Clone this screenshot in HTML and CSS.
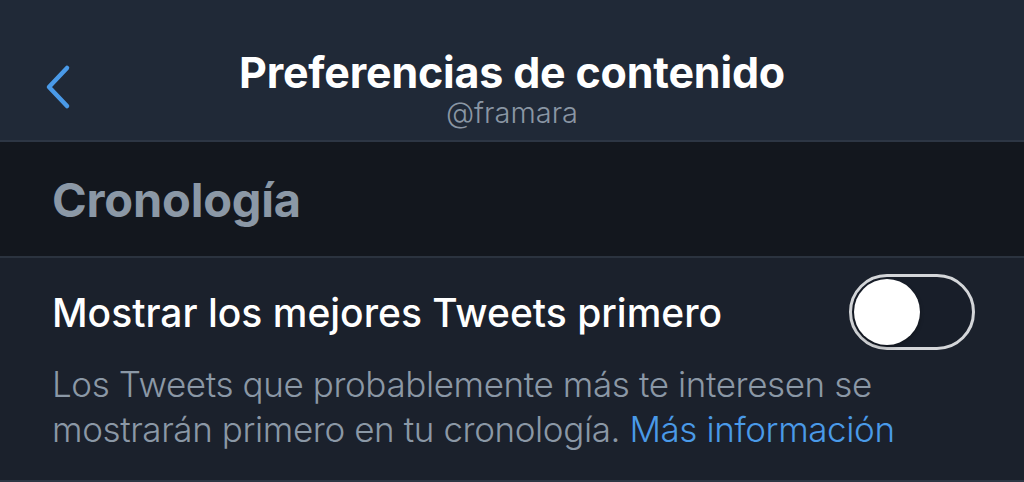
FILE: index.html
```html
<!DOCTYPE html>
<html lang="es">
    <head>
        <meta charset="UTF-8" />
        <meta name="viewport" content="width=device-width, initial-scale=1.0" />
        <title>Preferencias de contenido</title>
        <link rel="stylesheet" href="styles.css">
    </head>
    <body>
        <header class="nav-bar">
            <button class="back-btn" aria-label="Volver">
                <svg width="30" height="46" viewBox="0 0 30 46">
                    <path d="M25 4 L7 23 L25 42" fill="none" stroke="#4a9ae8" stroke-width="4.5" stroke-linecap="round" stroke-linejoin="round" />
                </svg>
            </button>
            <div class="nav-titles">
                <h1 class="nav-title">Preferencias de contenido</h1>
                <p class="nav-subtitle">@framara</p>
            </div>
        </header>

        <section class="section-header">
            <h2>Cronología</h2>
        </section>

        <section class="setting">
            <div class="setting-row">
                <span class="setting-label">Mostrar los mejores Tweets primero</span>
                <label class="switch">
                    <input type="checkbox" />
                    <span class="knob"></span>
                </label>
            </div>
            <p class="setting-desc">
                Los Tweets que probablemente más te interesen se<br>
                mostrarán primero en tu cronología. <a href="#">Más información</a>
            </p>
        </section>
    </body>
</html>
```

FILE: styles.css
```css
* {
    margin: 0;
    padding: 0;
    box-sizing: border-box;
}

body {
    font-family: Inter, 'Noto Sans', sans-serif;
    background-color: #1b212c;
    color: #fff;
    height: 482px;
    overflow: hidden;
}

.nav-bar {
    position: relative;
    height: 142px;
    background-color: #202937;
    border-bottom: 2px solid #2d3644;
    display: flex;
    justify-content: center;
    align-items: center;
}

.back-btn {
    position: absolute;
    left: 42px;
    top: 64px;
    background: none;
    border: none;
    display: flex;
}

.nav-titles {
    text-align: center;
    padding-top: 36px;
}

.nav-title {
    font-size: 43px;
    font-weight: 700;
    line-height: 50px;
    letter-spacing: -0.2px;
}

.nav-subtitle {
    font-size: 29px;
    font-weight: 300;
    color: #8a96a4;
    line-height: 32px;
}

.section-header {
    height: 116px;
    background-color: #13171e;
    border-bottom: 2px solid #2b333f;
    padding: 0 52px;
    display: flex;
    align-items: center;
}

.section-header h2 {
    font-size: 47px;
    font-weight: 700;
    color: #8b98a6;
    letter-spacing: -0.2px;
}

.setting {
    padding: 16px 49px 0 52px;
    border-bottom: 2px solid #2d3644;
    height: 224px;
}

.setting-row {
    display: flex;
    justify-content: space-between;
    align-items: center;
}

.setting-label {
    font-size: 39px;
    font-weight: 500;
}

.switch {
    position: relative;
    width: 126px;
    height: 76px;
    border-radius: 38px;
    border: 3px solid #d4d6d9;
    background-color: #181e29;
}

.switch input {
    display: none;
}

.knob {
    position: absolute;
    left: 2px;
    top: 2px;
    width: 66px;
    height: 66px;
    border-radius: 50%;
    background-color: #fff;
    box-shadow: 0 2px 4px rgba(0, 0, 0, 0.3);
}

.setting-desc {
    margin-top: 12px;
    font-size: 35px;
    font-weight: 300;
    line-height: 45px;
    letter-spacing: -0.4px;
    color: #8b98a6;
}

.setting-desc a {
    color: #4a9ae8;
    text-decoration: none;
}
```
